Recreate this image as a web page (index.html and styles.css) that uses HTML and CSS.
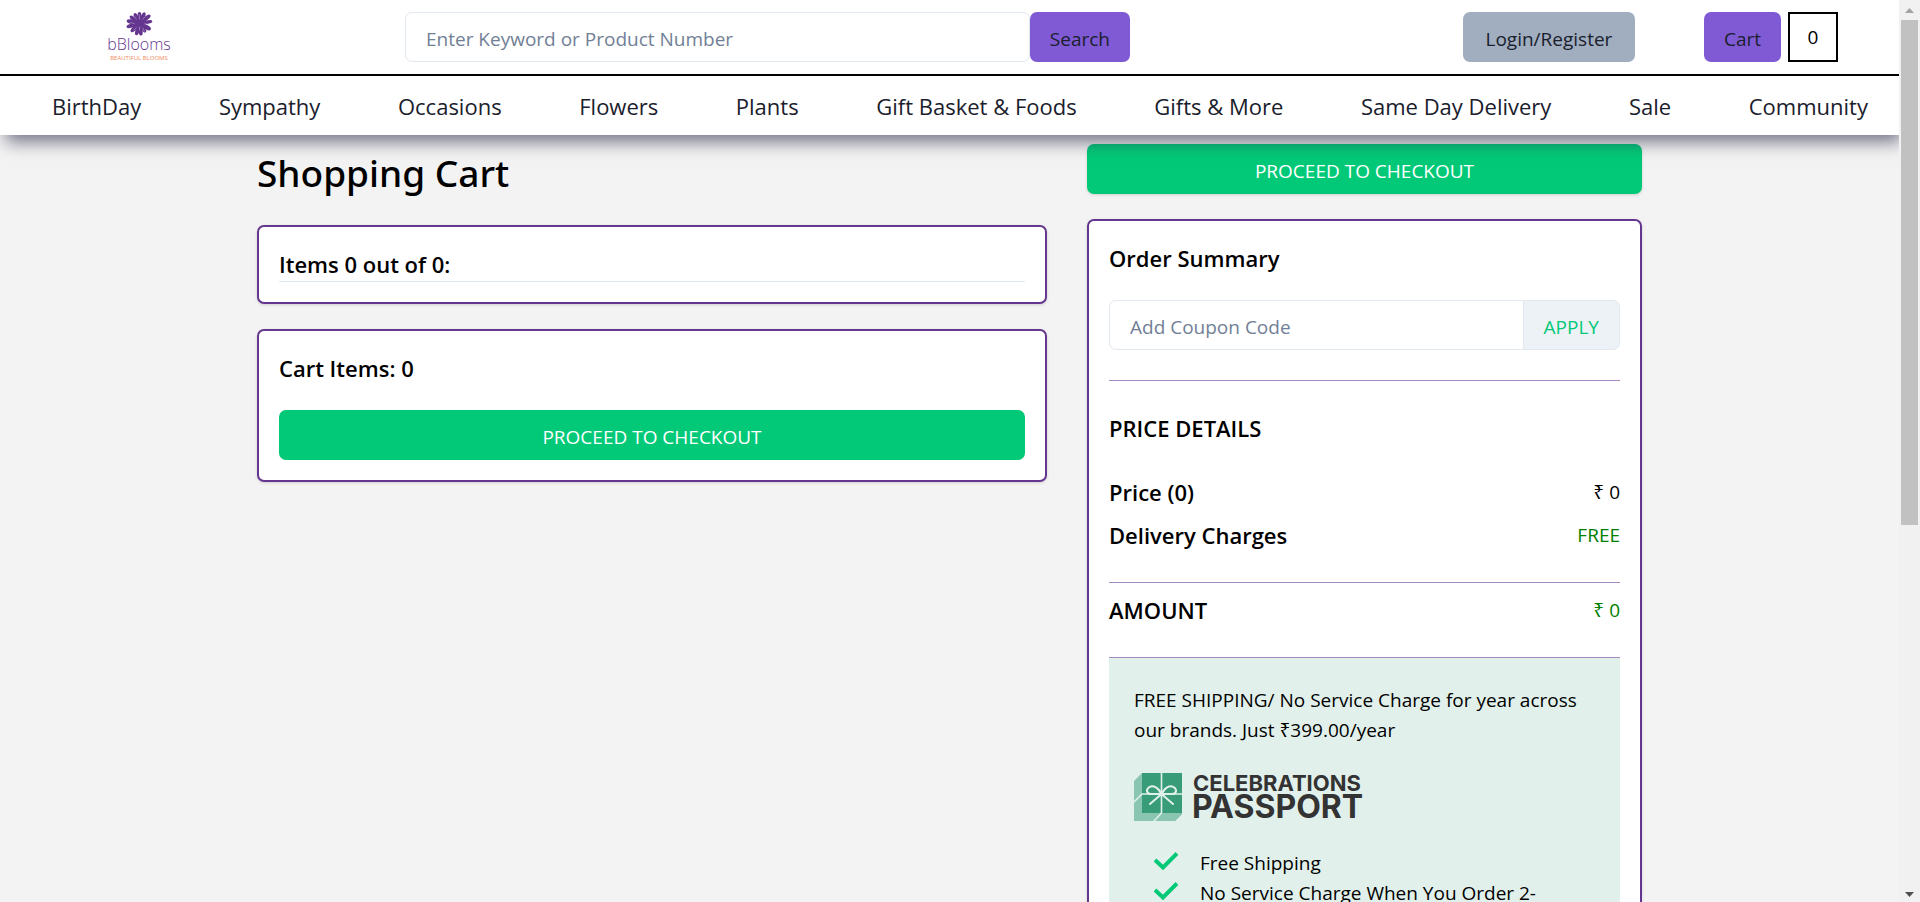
FILE: index.html
```html
<!DOCTYPE html>
<html lang="en">
<head>
<meta charset="utf-8">
<title>Shopping Cart</title>
<link rel="stylesheet" href="styles.css">
</head>
<body>
<div class="page">
  <header class="site-header">
    <div class="topbar">
      <a class="logo" href="#" aria-label="bBlooms">
        <svg viewBox="0 0 80 50" width="80" height="50">
          <g class="flower" transform="translate(40.5 11.5)">
            <ellipse cx="0" cy="-8" rx="1.9" ry="3.400"/>
            <ellipse cx="0" cy="-8" rx="2" ry="4.200" transform="rotate(26)"/>
            <ellipse cx="0" cy="-9" rx="2.100" ry="4.700" transform="rotate(52)"/>
            <ellipse cx="0" cy="-8.500" rx="1.800" ry="4.500" transform="rotate(80)"/>
            <ellipse cx="0" cy="-8" rx="2.200" ry="4.800" transform="rotate(118)"/>
            <ellipse cx="0" cy="-7" rx="1.900" ry="3.800" transform="rotate(145)"/>
            <ellipse cx="0" cy="-8" rx="2" ry="4.200" transform="rotate(172)"/>
            <ellipse cx="0" cy="-8" rx="2" ry="4.200" transform="rotate(196)"/>
            <ellipse cx="0" cy="-7.500" rx="2.200" ry="4.400" transform="rotate(226)"/>
            <ellipse cx="0" cy="-9" rx="2" ry="4.400" transform="rotate(255)"/>
            <ellipse cx="0" cy="-8.500" rx="2.200" ry="4.600" transform="rotate(282)"/>
            <ellipse cx="0" cy="-8" rx="2" ry="4.200" transform="rotate(308)"/>
            <ellipse cx="0" cy="-7.500" rx="2" ry="4" transform="rotate(334)"/>
            <circle r="5.500"/>
            <path class="flower-lines" d="M0-4V-9M-3-4-6-8M3-4 6-7M5 0 9 1M-5 0-9-1M-3 4-6 7M3 4 5 8M0 3V7"/>
          </g>
          <text class="logo-name" x="40" y="38" text-anchor="middle">bBlooms</text>
          <text class="logo-tag" x="40" y="48" text-anchor="middle">BEAUTIFUL BLOOMS</text>
        </svg>
      </a>
      <form class="search">
        <input class="field search-field" type="text" aria-label="Search" placeholder="Enter Keyword or Product Number">
        <button class="btn btn-purple" type="button">Search</button>
      </form>
      <button class="btn btn-gray login" type="button">Login/Register</button>
      <div class="cart">
        <button class="btn btn-purple" type="button">Cart</button>
        <span class="cart-count">0</span>
      </div>
    </div>
    <nav class="menu">
      <a href="#">BirthDay</a>
      <a href="#">Sympathy</a>
      <a href="#">Occasions</a>
      <a href="#">Flowers</a>
      <a href="#">Plants</a>
      <a href="#">Gift Basket &amp; Foods</a>
      <a href="#">Gifts &amp; More</a>
      <a href="#">Same Day Delivery</a>
      <a href="#">Sale</a>
      <a href="#">Community</a>
    </nav>
  </header>

  <main class="content">
    <section class="items">
      <h1>Shopping Cart</h1>
      <div class="card">
        <h2 class="underlined">Items 0 out of 0:</h2>
      </div>
      <div class="card">
        <h2>Cart Items: 0</h2>
        <button class="btn btn-green" type="button">PROCEED TO CHECKOUT</button>
      </div>
    </section>

    <section class="summary">
      <button class="btn btn-green raised" type="button">PROCEED TO CHECKOUT</button>
      <div class="card">
        <h2>Order Summary</h2>
        <div class="coupon">
          <input class="field coupon-field" type="text" aria-label="Coupon code" placeholder="Add Coupon Code">
          <button class="apply" type="button">APPLY</button>
        </div>
        <hr>
        <h2 class="details-title">PRICE DETAILS</h2>
        <div class="row"><h2>Price (0)</h2><span>₹ 0</span></div>
        <div class="row"><h2>Delivery Charges</h2><span class="green">FREE</span></div>
        <hr class="amount-rule">
        <div class="row amount"><h2>AMOUNT</h2><span class="green">₹ 0</span></div>
        <hr>
        <div class="passport">
          <p>FREE SHIPPING/ No Service Charge for year across our brands. Just ₹399.00/year</p>
          <svg class="passport-logo" viewBox="0 0 232 48" width="232" height="48" role="img" aria-label="Celebrations Passport">
            <path fill="#8ac5b1" d="M0 8 8 0V41H40L48 34V41L41 48H0Z"/>
            <path fill="#8ac5b1" d="M8 34H48V41L41 48H8Z"/>
            <path fill="#389c79" d="M8 0H48V40H8Z"/>
            <g fill="none" stroke="#e2f0eb" stroke-width="1.6" stroke-linecap="round">
              <path d="M27.500 0V40L20 48M48 21H8L0 29"/>
              <path stroke-width="2" d="M27.500 21C24 14 19 12 15.500 14C11 17 13 21 17 21H27.500C31 14 36 12 39.500 14C44 17 42 21 38 21H27.500M27.500 21 16 31M27.500 21 39 31"/>
            </g>
            <text class="pass-top" x="59" y="18">CELEBRATIONS</text>
            <text class="pass-bottom" x="58" y="45">PASSPORT</text>
          </svg>
          <ul>
            <li><svg class="check" viewBox="0 0 24 18" width="24" height="18"><path d="M1 8 9 15.500 23 1.500"/></svg><span>Free Shipping</span></li>
            <li><svg class="check" viewBox="0 0 24 18" width="24" height="18"><path d="M1 8 9 15.500 23 1.500"/></svg><span>No Service Charge When You Order 2-</span></li>
          </ul>
        </div>
      </div>
    </section>
  </main>
</div>
<div class="scrollbar" aria-hidden="true">
  <svg viewBox="0 0 21 20" width="21" height="20"><path fill="#a3a3a3" d="M6 13 10.500 8 15 13Z"/></svg>
  <div class="thumb"></div>
  <svg viewBox="0 0 21 20" width="21" height="20"><path fill="#505050" d="M6 10 10.500 15 15 10Z"/></svg>
</div>
</body>
</html>
```
FILE: styles.css
```css
* { box-sizing: border-box; margin: 0; padding: 0; }

body {
  display: flex;
  height: 100vh;
  overflow: hidden;
  background: #f3f3f3;
  color: #000;
  font: 400 19px/30px "Open Sans", "Noto Sans", sans-serif;
}

.page { flex: 1; min-width: 0; overflow: hidden; }

/* Header */
.site-header {
  position: relative;
  background: #fff;
  box-shadow: 4px 9px 16px -2px rgba(50, 50, 80, .65);
}
.topbar {
  display: flex;
  align-items: center;
  padding: 12px 61px 12px 99px;
  border-bottom: 2px solid #000;
}
.logo, .logo svg { display: block; }
.flower { fill: #65368f; }
.flower-lines { fill: none; stroke: #b79fce; stroke-width: .6; }
.logo-name { font: 300 16px "Open Sans", sans-serif; fill: #65368f; }
.logo-tag { font: 400 6px "Open Sans", sans-serif; fill: #f08b5c; }

.search { display: flex; width: 725px; margin-left: 226px; }
.field {
  flex: 1;
  min-width: 0;
  height: 50px;
  padding: 4px 20px 0;
  border: 1px solid #e2e8f0;
  border-radius: 7px;
  background: #fff;
  font: inherit;
}
.field::placeholder { color: #718096; opacity: 1; }
.btn {
  height: 50px;
  padding: 4px 20px 0;
  border: 0;
  border-radius: 7px;
  color: #1a202c;
  font: inherit;
}
.btn-purple { background: #805ad5; }
.btn-gray { background: #a0aec0; }
.btn-green { width: 100%; background: #02c977; color: #fff; }
.raised { box-shadow: 0 1px 3px rgba(0, 0, 0, .15); }
.login { min-width: 172px; margin-left: auto; }
.cart { display: flex; gap: 7px; margin-left: 69px; }
.cart-count {
  width: 50px;
  height: 50px;
  border: 2px solid #000;
  line-height: 46px;
  text-align: center;
}

.menu {
  display: flex;
  justify-content: space-between;
  padding: 15px 31px 14px 52px;
  font-size: 22px;
}
.menu a { color: #1a202c; text-decoration: none; white-space: nowrap; }

/* Page body */
.content {
  display: grid;
  grid-template-columns: 790fr 555fr;
  gap: 40px;
  max-width: 1385px;
  margin: 0 auto;
  padding-top: 9px;
}
.items, .summary { display: flex; flex-direction: column; gap: 25px; }
h1 {
  padding: 5px 0 3px;
  font: 500 37px/48px "Noto Sans", "Open Sans", sans-serif;
}
h2 { font-size: 22px; font-weight: 600; line-height: 34px; }
.card {
  padding: 20px;
  border: 2px solid #65368f;
  border-radius: 7px;
  background: #fff;
  box-shadow: 0 1px 3px rgba(0, 0, 0, .15);
}
.underlined { border-bottom: 1px solid #e2e8f0; }
.card .btn-green { display: block; margin-top: 25px; }

.coupon { display: flex; margin: 25px 0 30px; }
.coupon-field { border-radius: 7px 0 0 7px; }
.apply {
  padding: 4px 20px 0;
  border: 1px solid #e2e8f0;
  border-left: 0;
  border-radius: 0 7px 7px 0;
  background: #edf2f7;
  color: #02c977;
  font: inherit;
}
hr { border: 0; border-top: 1px solid #a589c0; }
.details-title { margin: 30px 0; }
.row {
  display: flex;
  align-items: center;
  justify-content: space-between;
  margin-bottom: 9px;
}
.green { color: green; }
.amount-rule { margin: 30px 0 10px; }
.amount { margin-bottom: 30px; }

.passport { padding: 27px 25px 25px; background: #e2f0eb; }
.passport-logo { display: block; margin: 28px 0 27px; overflow: visible; }
.pass-top { font: 700 22px Inter, sans-serif; fill: #333; }
.pass-bottom { font: 700 32px Inter, sans-serif; fill: #333; }
.passport ul { padding-left: 20px; list-style: none; }
.passport li { display: flex; gap: 22px; white-space: nowrap; }
.check { flex: none; margin-top: 4px; fill: none; stroke: #02c977; stroke-width: 4; }

/* Scrollbar */
.scrollbar {
  display: flex;
  flex-direction: column;
  width: 21px;
  background: #f1f1f1;
}
.scrollbar svg { flex: none; }
.thumb { height: 56%; margin: 0 2px auto; background: #c1c1c1; }
```
